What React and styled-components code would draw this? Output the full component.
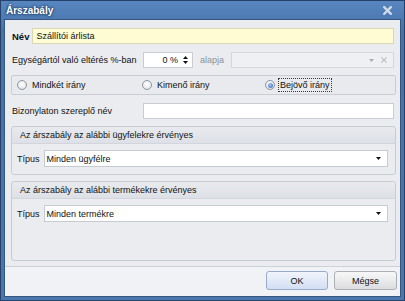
import React from 'react';
import styled, { createGlobalStyle } from 'styled-components';

const Global = createGlobalStyle`
  html, body { margin: 0; padding: 0; background: #ffffff; }
  body { font-family: "Liberation Sans", Arial, sans-serif; font-size: 9px; color: #111111; }
  * { box-sizing: border-box; }
`;

const Window = styled.div`
  width: 405px;
  height: 301px;
  display: flex;
  flex-direction: column;
  border: 1px solid #26426a;
  background: linear-gradient(#5886c0, #4672a9 30px, #4a77ae);
  padding: 0 3px 3px 3px;
`;

const TitleBar = styled.div`
  height: 18px;
  display: flex;
  align-items: center;
  justify-content: space-between;
  padding: 0 9px 0 2px;
  color: #ffffff;
  font-weight: bold;
  font-size: 10px;
  text-shadow: 0 0 2px #1c3860, 0 0 3px #1c3860;
`;

const Panel = styled.div`
  flex: 1;
  display: flex;
  flex-direction: column;
  border: 1px solid #35577f;
  background: #eaecf0;
`;

const Body = styled.div`
  flex: 1;
  display: flex;
  flex-direction: column;
  padding: 8px 4px 5px 6px;
`;

const Row = styled.div`
  display: flex;
  align-items: center;
  height: ${p => p.$h || 16}px;
  margin-top: ${p => p.$mt || 0}px;
  padding: 0 2px 0 1px;
  gap: ${p => p.$gap || 0}px;
`;

const Label = styled.span`
  font-weight: ${p => (p.$bold ? 'bold' : 'normal')};
  font-size: ${p => (p.$bold ? '9.5px' : '9px')};
  width: ${p => (p.$w ? p.$w + 'px' : 'auto')};
  flex: none;
  margin: 0 ${p => p.$mx || 0}px;
  color: ${p => (p.$muted ? '#8c9097' : '#111111')};
  white-space: nowrap;
`;

const TextBox = styled.div`
  flex: 1;
  height: 100%;
  display: flex;
  align-items: center;
  padding: 0 3px;
  background: ${p => (p.$yellow ? '#fffbd2' : '#ffffff')};
  border: 1px solid ${p => (p.$yellow ? '#d9d6b4' : '#c9ccd2')};
`;

const Spin = styled.div`
  width: 50px;
  flex: none;
  height: 100%;
  display: flex;
  align-items: center;
  justify-content: flex-end;
  gap: 5px;
  padding-right: 4px;
  background: #ffffff;
  border: 1px solid #c9ccd2;
`;

const SpinArrows = styled.div`
  display: flex;
  flex-direction: column;
  align-items: center;
  gap: 2px;
`;

const Combo = styled.div`
  flex: 1;
  height: ${p => p.$h || 16}px;
  display: flex;
  align-items: center;
  justify-content: space-between;
  padding: 0 6px 0 2px;
  background: ${p => (p.$disabled ? '#eef0f3' : '#ffffff')};
  border: 1px solid ${p => (p.$disabled ? '#d3d6db' : '#c6cad1')};
`;

const ComboIcons = styled.div`
  display: flex;
  align-items: center;
  gap: 7px;
`;

const RadioBox = styled.div`
  margin-top: 7px;
  height: 20px;
  display: grid;
  grid-template-columns: 125px 123px 1fr;
  align-items: center;
  padding-left: 5px;
  border: 1px solid #c9cdd3;
  border-radius: 2px;
  background: #e8eaee;
`;

const RadioItem = styled.label`
  display: flex;
  align-items: center;
  gap: 3px;
`;

const RadioCircle = styled.span`
  width: 10px;
  height: 10px;
  border-radius: 50%;
  border: 1px solid #8e959e;
  background: radial-gradient(circle at 50% 40%, #ffffff, #d9dde3);
  display: flex;
  align-items: center;
  justify-content: center;
  flex: none;
  &::after {
    content: '';
    display: ${p => (p.$on ? 'block' : 'none')};
    width: 5px;
    height: 5px;
    border-radius: 50%;
    background: radial-gradient(circle at 40% 35%, #a7c7f5, #2f62b8);
  }
`;

const RadioText = styled.span`
  padding: 1px 1px;
  border: 1px dotted ${p => (p.$focus ? '#3a3a3a' : 'transparent')};
`;

const Group = styled.div`
  margin-top: ${p => p.$mt || 0}px;
  flex: ${p => (p.$grow ? 1 : 'none')};
  display: flex;
  flex-direction: column;
  border: 1px solid #c7cbd2;
  border-radius: 3px;
  background: #eaecf0;
`;

const GroupHeader = styled.div`
  height: 17px;
  display: flex;
  align-items: center;
  padding-left: 8px;
  background: linear-gradient(#e8eaee, #dde0e6);
  border-bottom: 1px solid #d2d5db;
  border-radius: 3px 3px 0 0;
`;

const GroupContent = styled.div`
  display: flex;
  align-items: center;
  gap: 4px;
  padding: 6px 7px 7px 5px;
`;

const Footer = styled.div`
  height: 30px;
  display: flex;
  justify-content: flex-end;
  align-items: flex-start;
  gap: 6px;
  padding: 4px 3px 0 0;
  border-top: 1px solid #cdd1d7;
  background: #f1f2f5;
`;

const Button = styled.button`
  width: ${p => p.$w}px;
  height: 19px;
  font-family: "Liberation Sans", Arial, sans-serif;
  font-size: 9px;
  color: #111111;
  border-radius: 3px;
  border: 1px solid ${p => (p.$primary ? '#98acc9' : '#acafb4')};
  background: ${p =>
    p.$primary
      ? 'linear-gradient(#f1f5fd, #d3def3)'
      : 'linear-gradient(#f7f7f8, #dcdde0)'};
  padding: 0;
`;

const Tri = ({ dir = 'down', color = '#111' }) => (
  <svg width="5" height="3" viewBox="0 0 5 3">
    {dir === 'down' ? (
      <polygon points="0,0 5,0 2.5,3" fill={color} />
    ) : (
      <polygon points="0,3 5,3 2.5,0" fill={color} />
    )}
  </svg>
);

const CloseX = ({ color, size = 8, w = 2 }) => (
  <svg width={size} height={size} viewBox="0 0 8 8">
    <path d="M1 1 L7 7 M7 1 L1 7" stroke={color} strokeWidth={w} strokeLinecap="square" />
  </svg>
);

export default function App() {
  return (
    <>
      <Global />
      <Window>
        <TitleBar>
          <span>Árszabály</span>
          <CloseX color="#d3dce8" size={9} w={2} />
        </TitleBar>
        <Panel>
          <Body>
            <Row $gap={3}>
              <Label $bold>Név</Label>
              <TextBox $yellow>Szállítói árlista</TextBox>
            </Row>
            <Row $mt={8}>
              <Label $w={131}>Egységártól való eltérés %-ban</Label>
              <Spin>
                <span>0 %</span>
                <SpinArrows>
                  <Tri dir="up" />
                  <Tri dir="down" />
                </SpinArrows>
              </Spin>
              <Label $muted $mx={7}>alapja</Label>
              <Combo $disabled>
                <span />
                <ComboIcons>
                  <Tri color="#a9adb3" />
                  <CloseX color="#b4b8be" size={6} w={1.4} />
                </ComboIcons>
              </Combo>
            </Row>
            <RadioBox>
              <RadioItem>
                <RadioCircle />
                <RadioText>Mindkét irány</RadioText>
              </RadioItem>
              <RadioItem>
                <RadioCircle />
                <RadioText>Kimenő irány</RadioText>
              </RadioItem>
              <RadioItem>
                <RadioCircle $on />
                <RadioText $focus>Bejövő irány</RadioText>
              </RadioItem>
            </RadioBox>
            <Row $mt={8}>
              <Label $w={131}>Bizonylaton szereplő név</Label>
              <TextBox />
            </Row>
            <Group $mt={7}>
              <GroupHeader>Az árszabály az alábbi ügyfelekre érvényes</GroupHeader>
              <GroupContent>
                <Label>Típus</Label>
                <Combo $h={17}>
                  <span>Minden ügyfélre</span>
                  <Tri />
                </Combo>
              </GroupContent>
            </Group>
            <Group $mt={6} $grow>
              <GroupHeader>Az árszabály az alábbi termékekre érvényes</GroupHeader>
              <GroupContent>
                <Label>Típus</Label>
                <Combo $h={17}>
                  <span>Minden termékre</span>
                  <Tri />
                </Combo>
              </GroupContent>
            </Group>
          </Body>
          <Footer>
            <Button $primary $w={62}>OK</Button>
            <Button $w={63}>Mégse</Button>
          </Footer>
        </Panel>
      </Window>
    </>
  );
}
